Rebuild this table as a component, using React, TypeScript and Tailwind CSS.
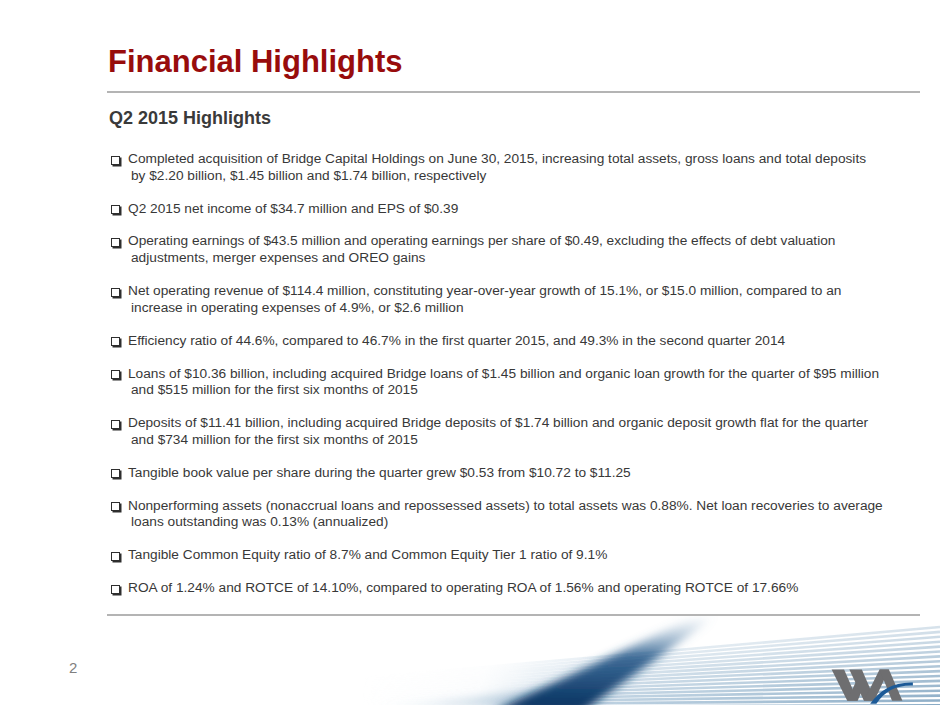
import React from 'react';

const highlights: string[][] = [
  [
    'Completed acquisition of Bridge Capital Holdings on June 30, 2015, increasing total assets, gross loans and total deposits',
    'by $2.20 billion, $1.45 billion and $1.74 billion, respectively',
  ],
  ['Q2 2015 net income of $34.7 million and EPS of $0.39'],
  [
    'Operating earnings of $43.5 million and operating earnings per share of $0.49, excluding the effects of debt valuation',
    'adjustments, merger expenses and OREO gains',
  ],
  [
    'Net operating revenue of $114.4 million, constituting year-over-year growth of 15.1%, or $15.0 million, compared to an',
    'increase in operating expenses of 4.9%, or $2.6 million',
  ],
  ['Efficiency ratio of 44.6%, compared to 46.7% in the first quarter 2015, and 49.3% in the second quarter 2014'],
  [
    'Loans of $10.36 billion, including acquired Bridge loans of $1.45 billion and organic loan growth for the quarter of $95 million',
    'and $515 million for the first six months of 2015',
  ],
  [
    'Deposits of $11.41 billion, including acquired Bridge deposits of $1.74 billion and organic deposit growth flat for the quarter',
    'and $734 million for the first six months of 2015',
  ],
  ['Tangible book value per share during the quarter grew $0.53 from $10.72 to $11.25'],
  [
    'Nonperforming assets (nonaccrual loans and repossessed assets) to total assets was 0.88%. Net loan recoveries to average',
    'loans outstanding was 0.13% (annualized)',
  ],
  ['Tangible Common Equity ratio of 8.7% and Common Equity Tier 1 ratio of 9.1%'],
  ['ROA of 1.24% and ROTCE of 14.10%, compared to operating ROA of 1.56% and operating ROTCE of 17.66%'],
];

const stripes = Array.from({ length: 17 }, (_, i) => i);

// background art of the footer: fanning stripes crossed by a dark blurred streak
const Swoosh: React.FC = () => (
  <svg
    className="absolute inset-0"
    width="940"
    height="91"
    viewBox="0 0 940 91"
    xmlns="http://www.w3.org/2000/svg"
  >
    <defs>
      <linearGradient id="stripeFade" x1="360" y1="0" x2="940" y2="0" gradientUnits="userSpaceOnUse">
        <stop offset="0" stopColor="#c9dbe8" stopOpacity="0" />
        <stop offset="0.3" stopColor="#a9c4d9" stopOpacity="0.7" />
        <stop offset="1" stopColor="#8aabc5" stopOpacity="1" />
      </linearGradient>
      <linearGradient id="streakFade" x1="0" y1="91" x2="0" y2="0" gradientUnits="userSpaceOnUse">
        <stop offset="0" stopColor="#0c3462" stopOpacity="1" />
        <stop offset="0.55" stopColor="#1f5486" stopOpacity="0.85" />
        <stop offset="1" stopColor="#7fa5c4" stopOpacity="0" />
      </linearGradient>
      <linearGradient id="hazeFade" x1="360" y1="0" x2="550" y2="0" gradientUnits="userSpaceOnUse">
        <stop offset="0" stopColor="#d7e5ef" stopOpacity="0" />
        <stop offset="1" stopColor="#8fb0ca" stopOpacity="0.85" />
      </linearGradient>
      <linearGradient id="maskFade" x1="480" y1="70" x2="570" y2="100" gradientUnits="userSpaceOnUse">
        <stop offset="0" stopColor="#fff" stopOpacity="0.15" />
        <stop offset="1" stopColor="#fff" stopOpacity="1" />
      </linearGradient>
      <mask id="stripeMask" maskUnits="userSpaceOnUse" x="0" y="0" width="940" height="91">
        <rect x="0" y="0" width="940" height="91" fill="url(#maskFade)" />
        <polygon points="532,95 940,95 940,0 712,0" fill="#fff" />
      </mask>
      <filter id="soft" x="-30%" y="-30%" width="160%" height="160%">
        <feGaussianBlur stdDeviation="4" />
      </filter>
      <filter id="softer" x="-10%" y="-10%" width="120%" height="120%">
        <feGaussianBlur stdDeviation="0.5" />
      </filter>
    </defs>

    <polygon points="380,91 560,91 600,66 470,82" fill="url(#hazeFade)" filter="url(#soft)" />

    <g filter="url(#softer)" mask="url(#stripeMask)">
      {stripes.map((i) => (
        <line
          key={i}
          x1="360"
          y1={62 + i * 1.8}
          x2="940"
          y2={11 + i * 4.9}
          stroke="url(#stripeFade)"
          strokeWidth={2.6}
          strokeOpacity={0.35 + (0.65 * i) / 16}
        />
      ))}
    </g>

    <polygon points="492,96 582,96 716,0 696,0" fill="url(#streakFade)" filter="url(#soft)" />
  </svg>
);

const Logo: React.FC = () => (
  <svg width="100" height="44" viewBox="0 0 96 42" xmlns="http://www.w3.org/2000/svg">
    <g fill="#6e6e70">
      <polygon points="15,7 27,7 40,37 30,37" />
      <polygon points="30,37 40,37 45,25 40,15" />
      <polygon points="32,7 44,7 57,37 46,37" />
      <polygon points="46,37 56,37 70,7 61,7" />
      <polygon points="61,7 70,7 83,37 73,37" />
    </g>
    <path d="M52 40 C 61 27, 74 19, 93 19.5 L 93 22.5 C 77 22, 66 28, 58 40 Z" fill="#1c5a97" />
  </svg>
);

const BulletBox: React.FC = () => (
  <span className="mt-[4.5px] ml-[3px] w-[9px] h-[9px] shrink-0 border border-[#2e2e2e] shadow-[1.5px_1.5px_0_#2e2e2e]" />
);

export default function App() {
  return (
    <div
      className="relative w-[940px] h-[705px] overflow-hidden bg-white flex flex-col"
      style={{ fontFamily: '"Liberation Sans", Arial, sans-serif' }}
    >
      <div className="pl-[108px] pr-[20px] pt-[46px] flex flex-col">
        <h1 className="text-[31px] leading-none font-bold text-[#980c0c] whitespace-nowrap">
          Financial Highlights
        </h1>
        <div className="mt-[14px] h-[2px] bg-[#b4b4b4] -ml-[1px]" />

        <h2 className="mt-[16px] ml-[1px] text-[18px] leading-none font-bold text-[#3a3a3a] whitespace-nowrap">
          Q2 2015 Highlights
        </h2>

        <ul className="mt-[24px] flex flex-col gap-[16.2px] text-[13.7px] leading-[16.7px] text-[#383838]">
          {highlights.map((lines, i) => (
            <li key={i} className="flex items-start">
              <BulletBox />
              <div className="ml-[8px] flex flex-col whitespace-nowrap">
                {lines.map((line, j) => (
                  <span key={j} className={j > 0 ? 'ml-[3px]' : ''}>
                    {line}
                  </span>
                ))}
              </div>
            </li>
          ))}
        </ul>

        <div className="mt-[17px] h-[2px] bg-[#b4b4b4] -ml-[1px]" />
      </div>

      <footer className="relative flex-1 flex justify-between items-start">
        <Swoosh />
        <span className="relative ml-[69px] mt-[44px] text-[15px] leading-none text-[#808080]">2</span>
        <div className="relative mt-[46px] mr-[24px]">
          <Logo />
        </div>
      </footer>
    </div>
  );
}
